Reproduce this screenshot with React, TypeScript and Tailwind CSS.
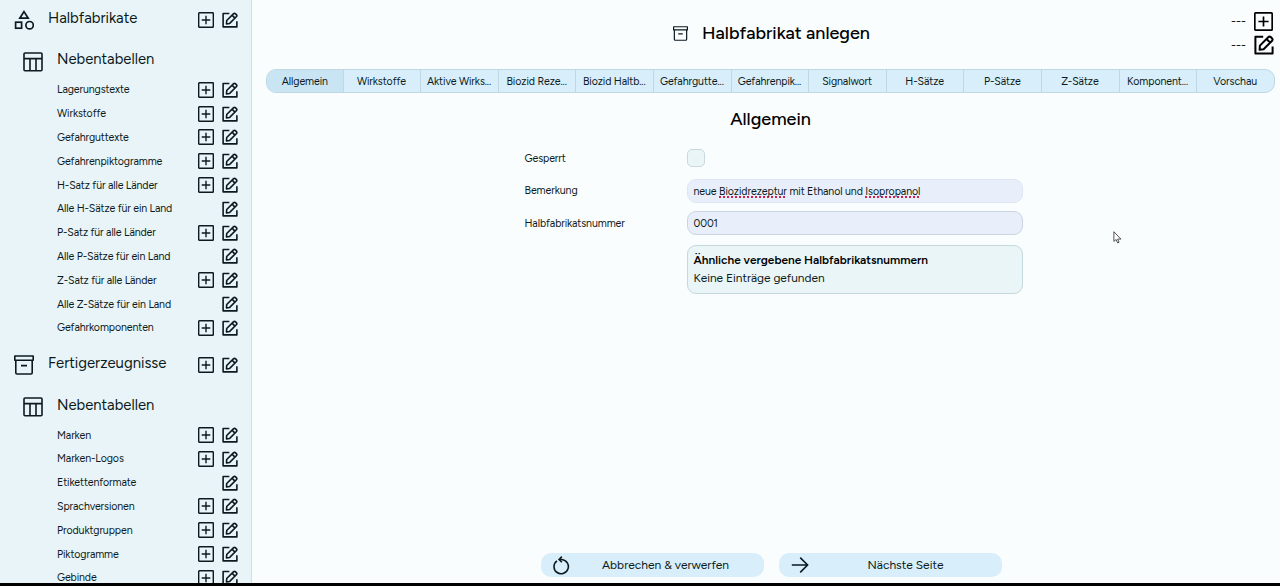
import { useId } from "react";

type IconProps = { className?: string };

function PlusBox({ className = "" }: IconProps) {
  return (
    <svg viewBox="0 0 16 16" fill="none" stroke="currentColor" className={className}>
      <rect x="0.7" y="0.7" width="14.6" height="14.6" rx="0.6" strokeWidth="1.4" />
      <path d="M8 3.7v8.6M3.7 8h8.6" strokeWidth="1.4" />
    </svg>
  );
}

function EditBox({ className = "" }: IconProps) {
  return (
    <svg viewBox="0 0 20 20" fill="none" stroke="currentColor" strokeWidth="2" strokeLinejoin="round" className={className}>
      <path d="M9.2 1.8H1.4V18.6H18.6V11.6" />
      <path d="M5.6 14.8l.3-4.2 8.3-8.3a2 2 0 0 1 2.8 0l.9.9a2 2 0 0 1 0 2.8L9.6 14.3 5.6 14.8zM12.8 4.2l3.4 3.4" />
    </svg>
  );
}

function Shapes({ className = "" }: IconProps) {
  return (
    <svg viewBox="0 0 20 20" fill="none" stroke="currentColor" strokeWidth="1.7" className={className}>
      <path d="M10 1.6L14.2 8.2H5.8z" />
      <rect x="1.6" y="12.2" width="6" height="6" />
      <circle cx="15.6" cy="15.2" r="3.7" />
    </svg>
  );
}

function TableIcon({ className = "" }: IconProps) {
  return (
    <svg viewBox="0 0 20 20" fill="none" stroke="currentColor" strokeWidth="1.6" className={className}>
      <rect x="1" y="1" width="18" height="17.8" rx="1" />
      <path d="M1 6.6h18M7 6.6v12M13 6.6v12" />
    </svg>
  );
}

function Archive({ className = "" }: IconProps) {
  return (
    <svg viewBox="0 0 20 20" fill="none" stroke="currentColor" strokeWidth="1.6" strokeLinejoin="round" className={className}>
      <path d="M.8 1h18.4v4.2H.8zM1.8 5.2v12.6c0 .8.4 1.2 1.2 1.2h14c.8 0 1.2-.4 1.2-1.2V5.2M7 10.6h6" />
    </svg>
  );
}

function Restart({ className = "" }: IconProps) {
  return (
    <svg viewBox="0 0 18 20" fill="none" stroke="currentColor" strokeWidth="1.7" className={className}>
      <path d="M4.2 5A7.6 7.6 0 1 0 9.4 3.6H6.6M9.4.6L6.4 3.6l3 3" />
    </svg>
  );
}

function Arrow({ className = "" }: IconProps) {
  return (
    <svg viewBox="0 0 18 18" fill="none" stroke="currentColor" strokeWidth="1.6" className={className}>
      <path d="M.8 9h15.6M9.2 1.6L16.6 9l-7.4 7.4" />
    </svg>
  );
}

function Actions({ add = true }: { add?: boolean }) {
  return (
    <div className="ml-auto flex items-center gap-2">
      {add && <PlusBox className="size-4" />}
      <EditBox className="size-4" />
    </div>
  );
}

function Section({ icon, title }: { icon: React.ReactNode; title: string }) {
  return (
    <div className="flex h-6 items-center pr-[13px] pl-3.5">
      {icon}
      <h2 className="-mt-1 ml-3.5 text-[14.9px]">{title}</h2>
      <Actions />
    </div>
  );
}

type Entry = { label: string; add?: boolean };

function SubTables({ entries }: { entries: Entry[] }) {
  return (
    <div>
      <div className="flex h-6 items-center pl-[23px]">
        <TableIcon className="size-5" />
        <h3 className="-mt-1 ml-3.5 text-[14.8px]">Nebentabellen</h3>
      </div>
      <ul className="mt-[4.4px]">
        {entries.map((e) => (
          <li key={e.label} className="flex h-[23.8px] items-center pr-[13px] pl-[57px] text-[10.6px] tracking-[-0.11px]">
            <span className="pt-px">{e.label}</span>
            <Actions add={e.add} />
          </li>
        ))}
      </ul>
    </div>
  );
}

const semiFinished: Entry[] = [
  { label: "Lagerungstexte" },
  { label: "Wirkstoffe" },
  { label: "Gefahrguttexte" },
  { label: "Gefahrenpiktogramme" },
  { label: "H-Satz für alle Länder" },
  { label: "Alle H-Sätze für ein Land", add: false },
  { label: "P-Satz für alle Länder" },
  { label: "Alle P-Sätze für ein Land", add: false },
  { label: "Z-Satz für alle Länder" },
  { label: "Alle Z-Sätze für ein Land", add: false },
  { label: "Gefahrkomponenten" },
];

const finished: Entry[] = [
  { label: "Marken" },
  { label: "Marken-Logos" },
  { label: "Etikettenformate", add: false },
  { label: "Sprachversionen" },
  { label: "Produktgruppen" },
  { label: "Piktogramme" },
  { label: "Gebinde" },
];

const tabs = [
  "Allgemein", "Wirkstoffe", "Aktive Wirks...", "Biozid Reze...", "Biozid Haltb...", "Gefahrgutte...", "Gefahrenpik...",
  "Signalwort", "H-Sätze", "P-Sätze", "Z-Sätze", "Komponent...", "Vorschau",
];

function Misspelled({ children }: { children: string }) {
  return (
    <span className="underline decoration-[#d0204f] decoration-dotted decoration-[1.5px] underline-offset-[1.5px] [text-decoration-skip-ink:none]">
      {children}
    </span>
  );
}

export default function App() {
  const id = useId();
  return (
    <div className="flex h-[586px] w-[1280px] flex-col overflow-hidden bg-black font-['Figtree','Inter',sans-serif] text-[#0c1a20]">
      <div className="flex h-[583px] overflow-hidden">
        <aside className="w-[252px] shrink-0 overflow-hidden border-r border-[#d3dde6] bg-[#e9f4f8] pt-2">
          <Section icon={<Shapes className="size-5" />} title="Halbfabrikate" />
          <div className="mt-[17.5px]">
            <SubTables entries={semiFinished} />
          </div>
          <div className="mt-[13.6px]">
            <Section icon={<Archive className="size-5" />} title="Fertigerzeugnisse" />
          </div>
          <div className="mt-[17.5px]">
            <SubTables entries={finished} />
          </div>
        </aside>

        <main className="flex flex-1 flex-col bg-[#f9fdfe] pr-[5px] pl-3.5">
          <header className="flex h-[69px] pt-[9px]">
            <div className="flex h-12 flex-1 items-center justify-center gap-3.5 pl-[46px]">
              <Archive className="size-[15px]" />
              <h1 className="text-[18px] font-medium text-black">Halbfabrikat anlegen</h1>
            </div>
            <div className="flex w-[44px] flex-col text-black">
              <div className="flex h-6 items-center justify-between pr-[2px] text-[12px]">
                <span>---</span>
                <PlusBox className="size-[19px]" />
              </div>
              <div className="flex h-6 items-center justify-between pr-[1.5px] text-[12px]">
                <span>---</span>
                <EditBox className="size-5" />
              </div>
            </div>
          </header>

          <nav className="flex h-6 shrink-0 overflow-hidden rounded-[10px] border border-[#bfd8e4] bg-[#d8eefa]">
            {tabs.map((t, i) => (
              <button
                key={t}
                className={
                  i === 0
                    ? "flex-1 basis-0 bg-[#c9e5f3] pt-px text-[10.6px] tracking-[-0.09px] whitespace-nowrap"
                    : "flex-1 basis-0 border-l border-[#bfd8e4] pt-px pr-px text-[10.6px] tracking-[-0.09px] whitespace-nowrap"
                }
              >
                {t}
              </button>
            ))}
          </nav>

          <h2 className="mt-3 text-center text-[18px] leading-7 font-medium text-black">Allgemein</h2>

          <form className="mt-[13px] ml-[258.5px] grid w-[498px] grid-cols-[162px_336px] text-[10.6px] tracking-[-0.09px]">
            <label htmlFor={id + "g"} className="flex h-[25px] items-center pt-px">Gesperrt</label>
            <div className="flex h-[25px] items-center">
              <div id={id + "g"} className="-mt-px h-[18px] w-[18.5px] rounded-[5px] border border-[#c8d8dd] bg-[#eaf5f8]" />
            </div>
            <label className="mt-2 flex h-6 items-center">Bemerkung</label>
            <div className="mt-2 flex h-6 items-center rounded-[9px] border border-[#dfe6f3] bg-[#e8effa] px-1.5">
              <span className="pt-px whitespace-pre">neue <Misspelled>Biozidrezeptur</Misspelled> mit Ethanol und <Misspelled>Isopropanol</Misspelled></span>
            </div>
            <label className="mt-2 flex h-[25px] items-center pt-px">Halbfabrikatsnummer</label>
            <div className="mt-2 flex h-6 items-center rounded-[9px] border border-[#cbd5e2] bg-[#e8effa] px-1.5 pt-px">0001</div>
            <div className="col-start-2 mt-[9px] h-[48.5px] rounded-[9px] border border-[#c5d8dd] bg-[#e9f5f7] px-1.5 pt-[4.5px] text-[11.9px] leading-[18.5px] tracking-normal">
              <p className="font-semibold text-black">Ähnliche vergebene Halbfabrikatsnummern</p>
              <p>Keine Einträge gefunden</p>
            </div>
          </form>

          <footer className="mt-auto mb-1.5 ml-[275px] flex gap-[15px] text-[12px]">
            <button className="flex h-6 w-[223px] items-center rounded-[10px] bg-[#d8eefa] pl-3">
              <Restart className="h-[19px] w-[17px]" />
              <span className="flex-1 pr-[3px] text-center">Abbrechen &amp; verwerfen</span>
            </button>
            <button className="flex h-6 w-[223px] items-center rounded-[10px] bg-[#d8eefa] pl-3">
              <Arrow className="size-[18px]" />
              <span className="flex-1 text-center">Nächste Seite</span>
            </button>
          </footer>
        </main>
      </div>
      <svg viewBox="0 0 9 14" className="absolute top-[231px] left-[1113px] h-[13px] w-[9px]" fill="white" stroke="#333" strokeWidth="0.9">
        <path d="M.6.8v10.4l2.4-2 1.7 3.6 1.5-.7-1.6-3.4h3.6z" />
      </svg>
    </div>
  );
}
